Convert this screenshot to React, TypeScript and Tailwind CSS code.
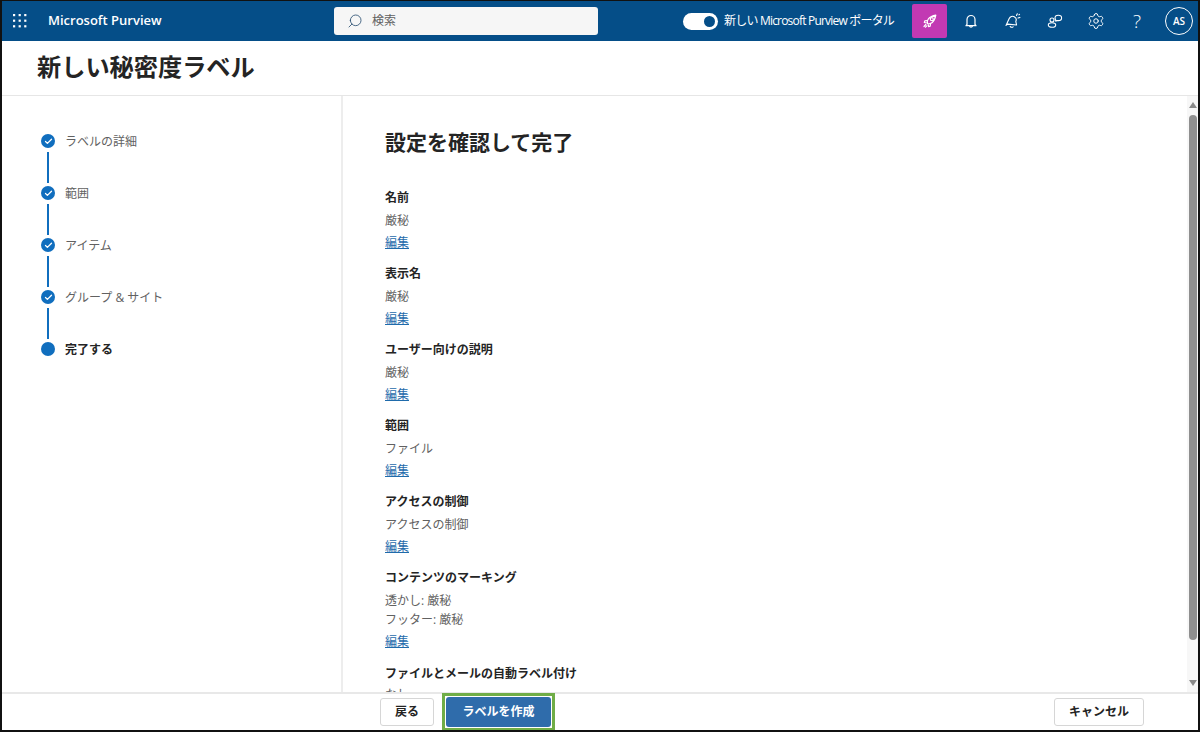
import { Check, Search, Settings } from "lucide-react";

const steps = ["ラベルの詳細", "範囲", "アイテム", "グループ & サイト"];

const sections: { label: string; values: string[] }[] = [
  { label: "名前", values: ["厳秘"] },
  { label: "表示名", values: ["厳秘"] },
  { label: "ユーザー向けの説明", values: ["厳秘"] },
  { label: "範囲", values: ["ファイル"] },
  { label: "アクセスの制御", values: ["アクセスの制御"] },
  { label: "コンテンツのマーキング", values: ["透かし: 厳秘", "フッター: 厳秘"] },
];

function AppGrid() {
  const dots = [0, 1, 2];
  return (
    <svg width="16" height="16" viewBox="0 0 16 16" fill="#ffffff">
      {dots.map((y) =>
        dots.map((x) => <rect key={`${x}-${y}`} x={1 + x * 5.6} y={1 + y * 5.6} width="2.2" height="2.2" />)
      )}
    </svg>
  );
}

function RocketIcon() {
  return (
    <svg width="16" height="16" viewBox="0 0 16 16" fill="none" stroke="#ffffff" strokeWidth="1.200" strokeLinejoin="round">
      <path d="M5.500 10.500C4.500 7.500 6.500 3.500 13.800 2.200 12.500 9.500 8.500 11.500 5.500 10.500z" />
      <circle cx="9.800" cy="6.200" r="1.500" />
      <path d="M5 7.500L2.800 7.800 2.300 9.500 4.800 9.800M8.500 11l-.3 2.200-1.700.500-.300-2.500" />
      <path d="M3.800 11.500L2 13.500M4.800 12.800L3.500 14.200" strokeLinecap="round" />
    </svg>
  );
}

function BellIcon() {
  return (
    <svg width="16" height="16" viewBox="0 0 16 16" fill="none" stroke="#ffffff" strokeWidth="1.200" strokeLinejoin="round">
      <path d="M4 11.500V6.500a4 4 0 0 1 8 0v5l1 1.200H3z" />
      <path d="M6.500 13a1.600 1.600 0 0 0 3 0" />
    </svg>
  );
}

function Announce() {
  return (
    <svg width="18" height="18" viewBox="0 0 18 18" fill="none" stroke="#ffffff" strokeWidth="1.100" strokeLinejoin="round">
      <path d="M5.200 6.500c1-2 3.200-2.700 5-1.800 1.800.9 2.500 2.900 1.600 4.800l.8 3.500-8.800-.9-1.800 1.300z" />
      <path d="M6 14a2 2 0 0 0 3.500.5" />
      <path d="M12.500 3.500l.8-1.800M14 6l1.900-.6M15 2.800l.5-.4" strokeLinecap="round" />
    </svg>
  );
}

function Community() {
  return (
    <svg width="18" height="18" viewBox="0 0 18 18" fill="none" stroke="#ffffff" strokeWidth="1.100">
      <path d="M9 6c0-1.700 1.500-2.800 3.300-2.800 1.800 0 3.300 1.100 3.300 2.700 0 1.600-1.500 2.700-3.300 2.700-.5 0-1 0-1.400-.2L9.800 9.200z" strokeLinejoin="round" />
      <circle cx="6" cy="8" r="2" />
      <path d="M2.300 13c0-1.500 1.500-2.300 3.700-2.300s3.700.8 3.700 2.300c0 1.600-1.700 2.300-3.700 2.300S2.300 14.600 2.300 13z" />
    </svg>
  );
}

function StepDot({ done }: { done: boolean }) {
  return (
    <div className="flex h-[14px] w-[14px] items-center justify-center rounded-full bg-[#106ebe]">
      {done ? <Check size={9} strokeWidth={3.500} color="#ffffff" /> : null}
    </div>
  );
}

export default function App() {
  return (
    <div className="flex h-[732px] w-[1200px] flex-col overflow-hidden border-x-2 border-b-2 border-t border-[#111111] bg-white font-['Open_Sans','Noto_Sans_CJK_JP',sans-serif] text-[#242424]">
      <header className="flex h-[40px] shrink-0 items-center bg-[#054e88] text-white">
        <div className="ml-[10px] flex w-[36px] items-center">
          <AppGrid />
        </div>
        <div className="w-[286px] text-[13px] font-semibold">Microsoft Purview</div>
        <div className="flex h-[28px] w-[264px] items-center rounded-[3px] bg-[#f6f6f6] pl-[13px] text-[12px] text-[#616161]">
          <Search size={16} strokeWidth={1.300} color="#2f5375" className="-scale-x-100" />
          <span className="ml-[9px]">検索</span>
        </div>
        <div className="ml-[85px] flex h-[17px] w-[35px] items-center justify-end rounded-full bg-white pr-[3px]">
          <div className="h-[11px] w-[11px] rounded-full bg-[#054e88]" />
        </div>
        <div className="ml-[6px] w-[188px] whitespace-nowrap text-[12px] tracking-[-0.8px]">新しい Microsoft Purview ポータル</div>
        <div className="flex h-[34px] w-[35px] items-center justify-center rounded-[2px] bg-[#c239b3]">
          <RocketIcon />
        </div>
        <div className="ml-[16px] flex w-[16px] justify-center">
          <BellIcon />
        </div>
        <div className="ml-[25px] flex w-[18px] justify-center">
          <Announce />
        </div>
        <div className="ml-[24px] flex w-[18px] justify-center">
          <Community />
        </div>
        <div className="ml-[24px] flex w-[16px] justify-center">
          <Settings size={18} strokeWidth={1.300} color="#ffffff" className="shrink-0" />
        </div>
        <div className="ml-[27px] w-[12px] text-center text-[19px] font-light leading-none">?</div>
        <div className="ml-[22px] flex h-[28px] w-[28px] items-center justify-center rounded-full border border-white text-[10px] font-semibold">AS</div>
      </header>

      <div className="flex h-[55px] shrink-0 items-center border-b border-[#e6e6e6] pb-[2px] pl-[35px] text-[24.2px] font-bold">新しい秘密度ラベル</div>

      <main className="flex min-h-0 flex-1">
        <nav className="w-[341px] shrink-0 border-r-2 border-[#ededed] pl-[39px] pt-[38px]">
          {steps.map((s) => (
            <div key={s} className="flex h-[52px] flex-col">
              <div className="flex h-[14px] items-center">
                <StepDot done />
                <span className="ml-[10px] whitespace-nowrap pt-[2px] text-[12px] text-[#616161]">{s}</span>
              </div>
              <div className="ml-[6px] mt-[4px] h-[31px] w-[2px] bg-[#106ebe]" />
            </div>
          ))}
          <div className="flex h-[14px] items-center">
            <StepDot done={false} />
            <span className="ml-[10px] pt-[2px] text-[12px] font-bold">完了する</span>
          </div>
        </nav>

        <section className="relative min-w-0 flex-1 overflow-hidden pl-[42px] pt-[29px]">
          <h2 className="h-[34px] text-[21px] font-semibold leading-[34px]">設定を確認して完了</h2>
          <div className="mt-[28px]">
            {sections.map((sec) => (
              <div key={sec.label} className="mb-[9px]">
                <div className="h-[22px] text-[12px] font-bold leading-[22px]">{sec.label}</div>
                <div className="pt-[2px]">
                  {sec.values.map((v) => (
                    <div key={v} className="h-[19px] text-[12px] leading-[19px] text-[#616161]">{v}</div>
                  ))}
                </div>
                <a className="mt-[2px] block h-[22px] text-[12px] leading-[22px] text-[#1f6bab] underline">編集</a>
              </div>
            ))}
            <div className="mt-[10px] h-[22px] text-[12px] font-bold leading-[22px]">ファイルとメールの自動ラベル付け</div>
            <div className="h-[20px] text-[12px] leading-[20px] text-[#616161]">なし</div>
          </div>

          <div className="absolute bottom-0 right-0 top-0 flex w-[11px] flex-col items-center bg-[#f7f7f7]">
            <div className="mt-[6px] h-0 w-0 border-x-[4px] border-b-[6px] border-x-transparent border-b-[#8a8a8a]" />
            <div className="mt-[7px] h-[525px] w-[8px] rounded-[4px] bg-[#8f8f8f]" />
            <div className="mb-[6px] mt-auto h-0 w-0 border-x-[4px] border-t-[6px] border-x-transparent border-t-[#8a8a8a]" />
          </div>
        </section>
      </main>

      <footer className="flex h-[38px] shrink-0 items-center border-t-2 border-[#e8e8e8]">
        <button className="ml-[378px] h-[28px] w-[54px] rounded-[3px] border border-[#d6d6d6] text-[12px] font-semibold">戻る</button>
        <div className="ml-[8px] flex h-[38px] w-[113px] items-center justify-center border-[3px] border-[#70ad47]">
          <button className="h-[30px] w-[105px] rounded-[3px] bg-[#2f6cab] text-[12px] font-semibold text-white">ラベルを作成</button>
        </div>
        <button className="ml-[499px] h-[28px] w-[90px] rounded-[3px] border border-[#d6d6d6] text-[12px] font-semibold">キャンセル</button>
      </footer>
    </div>
  );
}
